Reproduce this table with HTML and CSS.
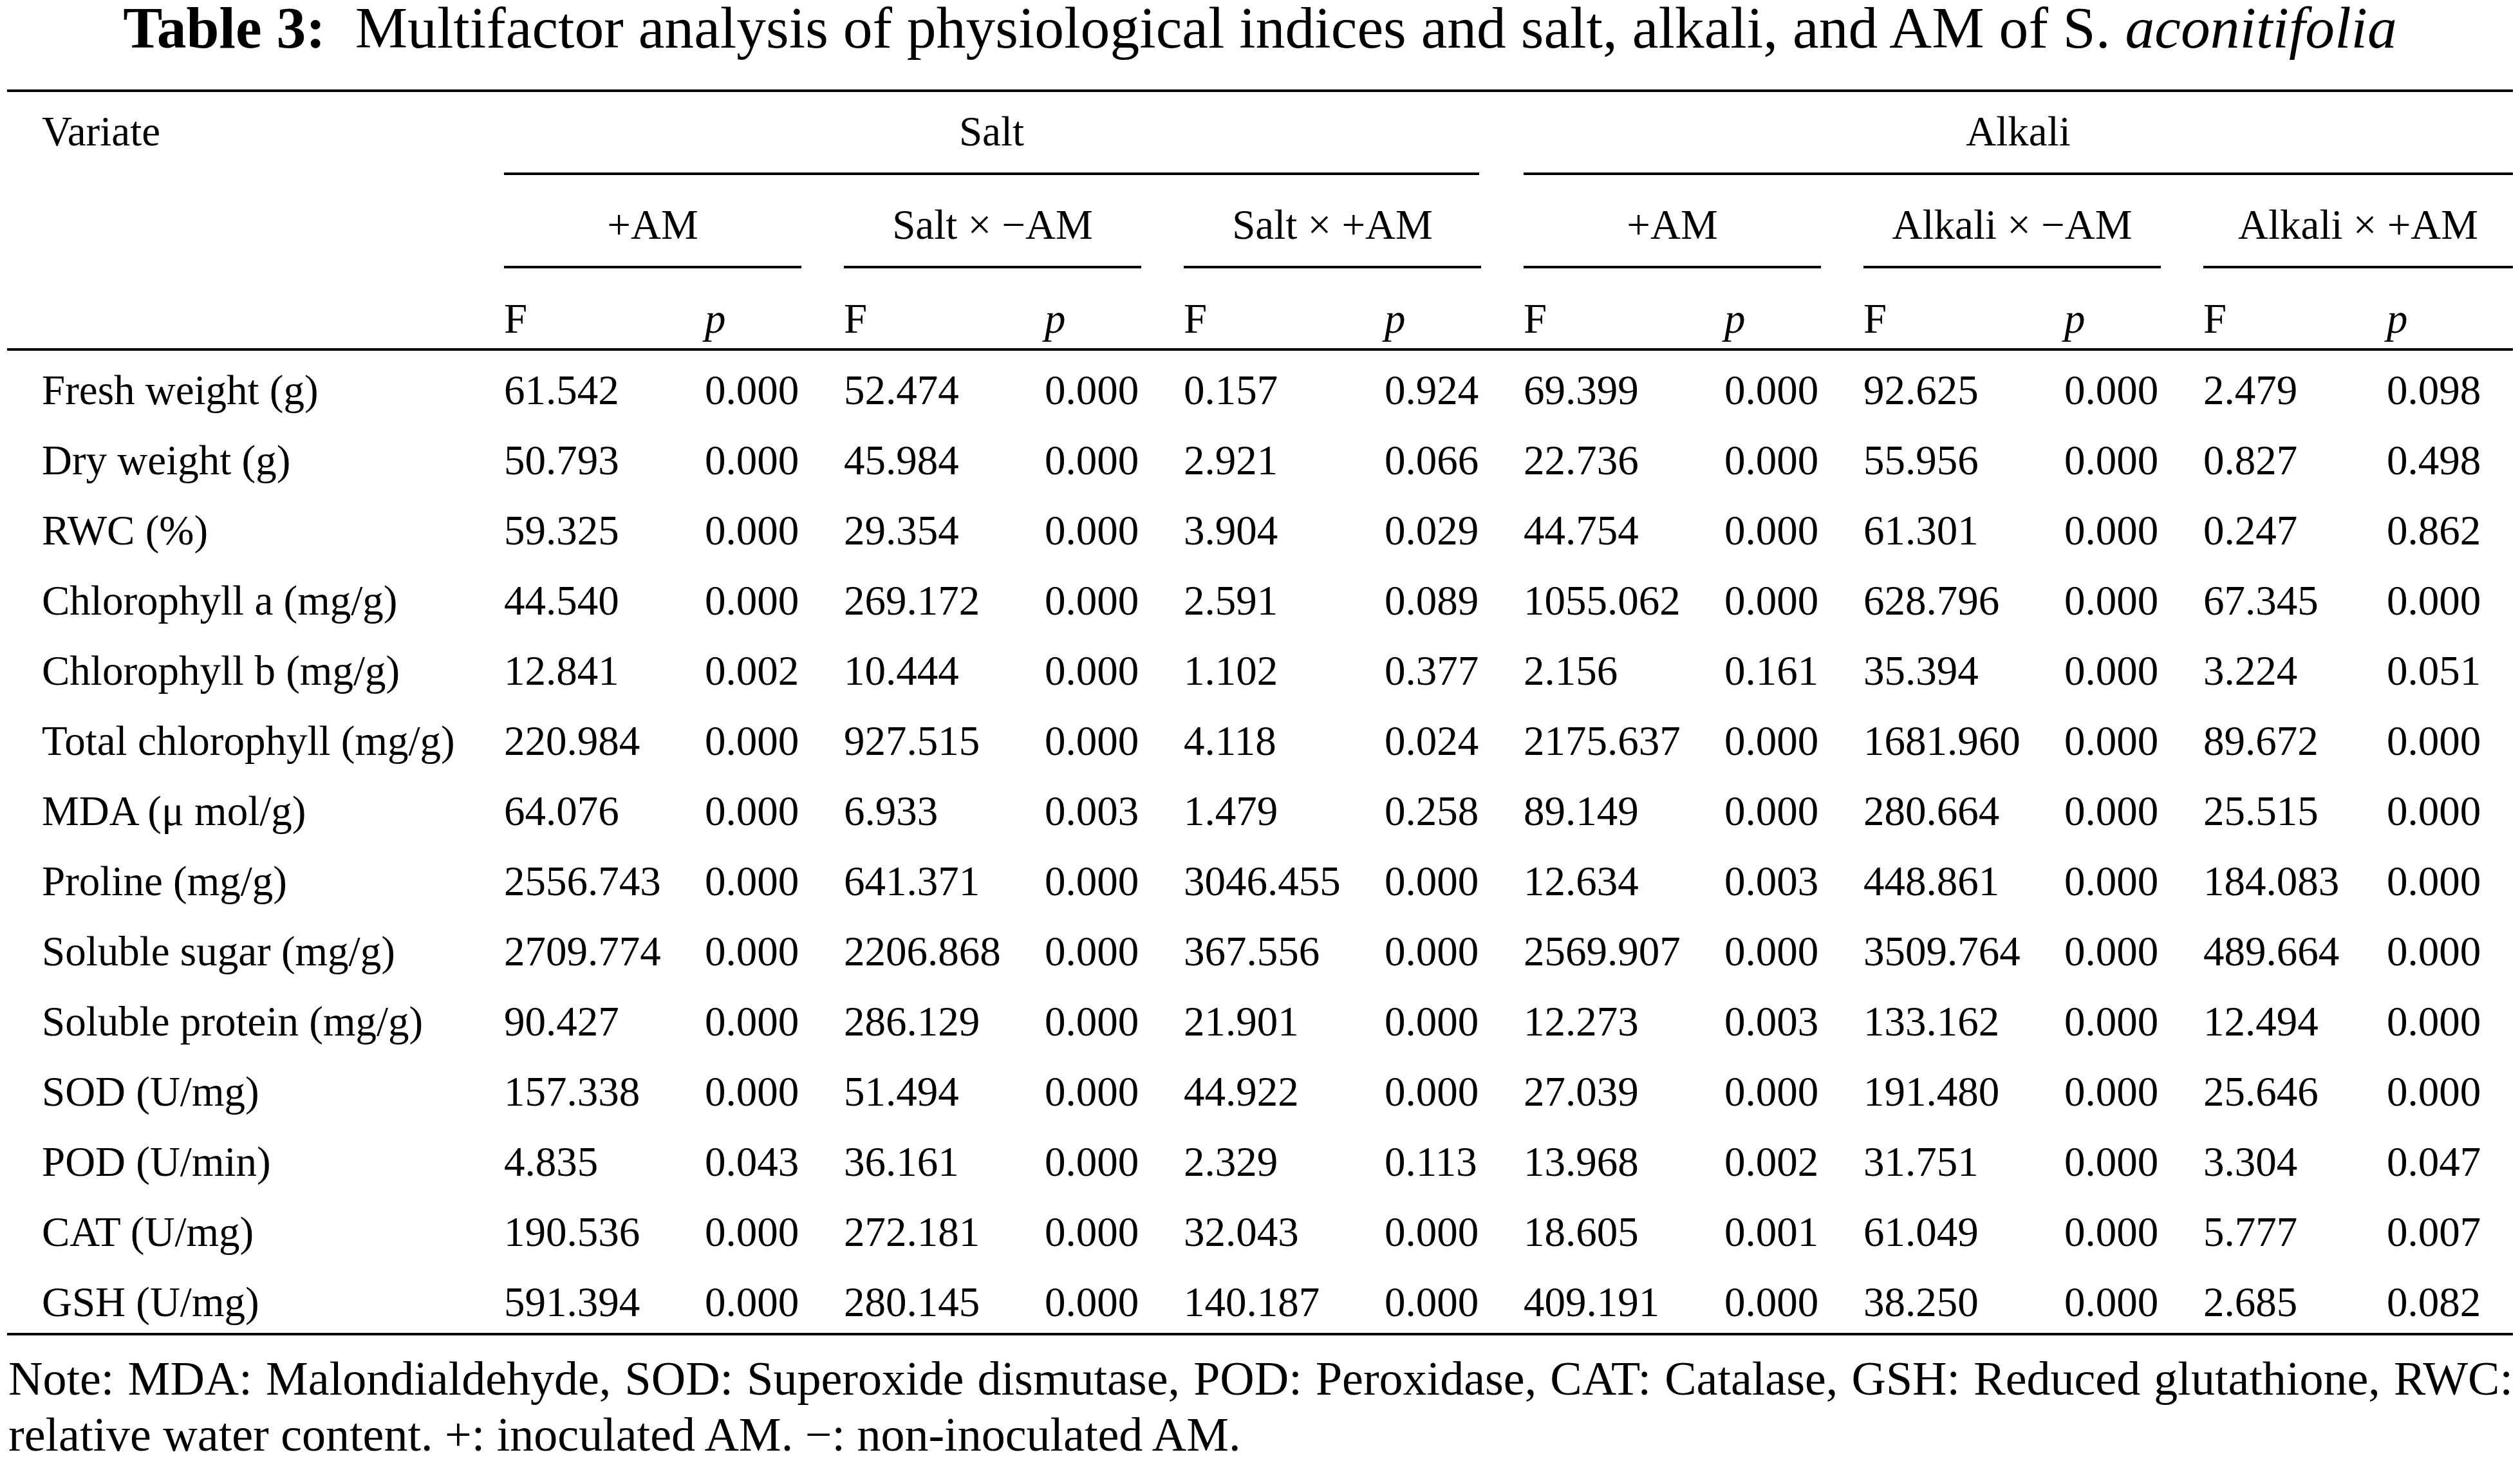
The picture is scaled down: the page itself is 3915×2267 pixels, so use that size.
FILE: index.html
```html
<!DOCTYPE html>
<html lang="en">
<head>
<meta charset="utf-8">
<title>Table 3</title>
<link rel="stylesheet" href="styles.css">
</head>
<body>
<div class="page">
  <h1 class="title"><b>Table 3:</b>&nbsp; Multifactor analysis of physiological indices and salt, alkali, and AM of S. <i>aconitifolia</i></h1>
  <table class="data">
    <colgroup>
      <col class="c-label">
      <col class="c-f"><col class="c-p">
      <col class="c-f"><col class="c-p">
      <col class="c-f"><col class="c-p">
      <col class="c-f"><col class="c-p">
      <col class="c-f"><col class="c-p">
      <col class="c-f-last"><col class="c-p-last">
    </colgroup>
    <thead>
      <tr class="h1">
        <th rowspan="3" class="variate">Variate</th>
        <th colspan="6" class="grp"><div class="rl rl-1 trim-main">Salt</div></th>
        <th colspan="6" class="grp"><div class="rl rl-1">Alkali</div></th>
      </tr>
      <tr class="h2">
        <th colspan="2" class="grp"><div class="rl rl-2 trim-sub">+AM</div></th>
        <th colspan="2" class="grp"><div class="rl rl-2 trim-sub">Salt × −AM</div></th>
        <th colspan="2" class="grp"><div class="rl rl-2 trim-sub">Salt × +AM</div></th>
        <th colspan="2" class="grp"><div class="rl rl-2 trim-sub">+AM</div></th>
        <th colspan="2" class="grp"><div class="rl rl-2 trim-sub">Alkali × −AM</div></th>
        <th colspan="2" class="grp"><div class="rl rl-2">Alkali × +AM</div></th>
      </tr>
      <tr class="h3">
        <th>F</th><th><i>p</i></th>
        <th>F</th><th><i>p</i></th>
        <th>F</th><th><i>p</i></th>
        <th>F</th><th><i>p</i></th>
        <th>F</th><th><i>p</i></th>
        <th>F</th><th><i>p</i></th>
      </tr>
    </thead>
    <tbody>
      <tr><td class="lbl">Fresh weight (g)</td><td>61.542</td><td>0.000</td><td>52.474</td><td>0.000</td><td>0.157</td><td>0.924</td><td>69.399</td><td>0.000</td><td>92.625</td><td>0.000</td><td>2.479</td><td>0.098</td></tr>
      <tr><td class="lbl">Dry weight (g)</td><td>50.793</td><td>0.000</td><td>45.984</td><td>0.000</td><td>2.921</td><td>0.066</td><td>22.736</td><td>0.000</td><td>55.956</td><td>0.000</td><td>0.827</td><td>0.498</td></tr>
      <tr><td class="lbl">RWC (%)</td><td>59.325</td><td>0.000</td><td>29.354</td><td>0.000</td><td>3.904</td><td>0.029</td><td>44.754</td><td>0.000</td><td>61.301</td><td>0.000</td><td>0.247</td><td>0.862</td></tr>
      <tr><td class="lbl">Chlorophyll a (mg/g)</td><td>44.540</td><td>0.000</td><td>269.172</td><td>0.000</td><td>2.591</td><td>0.089</td><td>1055.062</td><td>0.000</td><td>628.796</td><td>0.000</td><td>67.345</td><td>0.000</td></tr>
      <tr><td class="lbl">Chlorophyll b (mg/g)</td><td>12.841</td><td>0.002</td><td>10.444</td><td>0.000</td><td>1.102</td><td>0.377</td><td>2.156</td><td>0.161</td><td>35.394</td><td>0.000</td><td>3.224</td><td>0.051</td></tr>
      <tr><td class="lbl">Total chlorophyll (mg/g)</td><td>220.984</td><td>0.000</td><td>927.515</td><td>0.000</td><td>4.118</td><td>0.024</td><td>2175.637</td><td>0.000</td><td>1681.960</td><td>0.000</td><td>89.672</td><td>0.000</td></tr>
      <tr><td class="lbl">MDA (μ mol/g)</td><td>64.076</td><td>0.000</td><td>6.933</td><td>0.003</td><td>1.479</td><td>0.258</td><td>89.149</td><td>0.000</td><td>280.664</td><td>0.000</td><td>25.515</td><td>0.000</td></tr>
      <tr><td class="lbl">Proline (mg/g)</td><td>2556.743</td><td>0.000</td><td>641.371</td><td>0.000</td><td>3046.455</td><td>0.000</td><td>12.634</td><td>0.003</td><td>448.861</td><td>0.000</td><td>184.083</td><td>0.000</td></tr>
      <tr><td class="lbl">Soluble sugar (mg/g)</td><td>2709.774</td><td>0.000</td><td>2206.868</td><td>0.000</td><td>367.556</td><td>0.000</td><td>2569.907</td><td>0.000</td><td>3509.764</td><td>0.000</td><td>489.664</td><td>0.000</td></tr>
      <tr><td class="lbl">Soluble protein (mg/g)</td><td>90.427</td><td>0.000</td><td>286.129</td><td>0.000</td><td>21.901</td><td>0.000</td><td>12.273</td><td>0.003</td><td>133.162</td><td>0.000</td><td>12.494</td><td>0.000</td></tr>
      <tr><td class="lbl">SOD (U/mg)</td><td>157.338</td><td>0.000</td><td>51.494</td><td>0.000</td><td>44.922</td><td>0.000</td><td>27.039</td><td>0.000</td><td>191.480</td><td>0.000</td><td>25.646</td><td>0.000</td></tr>
      <tr><td class="lbl">POD (U/min)</td><td>4.835</td><td>0.043</td><td>36.161</td><td>0.000</td><td>2.329</td><td>0.113</td><td>13.968</td><td>0.002</td><td>31.751</td><td>0.000</td><td>3.304</td><td>0.047</td></tr>
      <tr><td class="lbl">CAT (U/mg)</td><td>190.536</td><td>0.000</td><td>272.181</td><td>0.000</td><td>32.043</td><td>0.000</td><td>18.605</td><td>0.001</td><td>61.049</td><td>0.000</td><td>5.777</td><td>0.007</td></tr>
      <tr><td class="lbl">GSH (U/mg)</td><td>591.394</td><td>0.000</td><td>280.145</td><td>0.000</td><td>140.187</td><td>0.000</td><td>409.191</td><td>0.000</td><td>38.250</td><td>0.000</td><td>2.685</td><td>0.082</td></tr>
    </tbody>
  </table>
  <p class="note">Note: MDA: Malondialdehyde, SOD: Superoxide dismutase, POD: Peroxidase, CAT: Catalase, GSH: Reduced glutathione, RWC: relative water content. +: inoculated AM. −: non-inoculated AM.</p>
</div>
</body>
</html>
```

FILE: styles.css
```css
html, body {
  margin: 0;
  padding: 0;
  background: #ffffff;
}

body {
  font-family: "Liberation Serif", "Times New Roman", serif;
  color: #000000;
}

.page {
  width: 3915px;
  height: 2267px;
  overflow: hidden;
}

.title {
  margin: 0;
  font-size: 91.6px;
  line-height: 86px;
  height: 86px;
  font-weight: normal;
  text-align: center;
  white-space: nowrap;
}

.title b {
  font-weight: bold;
}

.data {
  margin: 53px 0 0 11px;
  width: 3893px;
  table-layout: fixed;
  border-collapse: separate;
  border-spacing: 0;
  font-size: 65px;
  line-height: 65px;
}

.c-label { width: 772px; }
.c-f { width: 312px; }
.c-p { width: 216px; }
.c-f-last { width: 285px; }
.c-p-last { width: 196px; }

.data th {
  font-weight: normal;
  text-align: left;
  padding: 0;
  white-space: nowrap;
  vertical-align: top;
}

.h1 th {
  border-top: 4px solid #000;
}

.variate {
  padding: 29px 0 0 54px !important;
  border-bottom: 4px solid #000;
}

.grp {
  text-align: center !important;
}

.rl {
  border-bottom: 4px solid #000;
  text-align: center;
}

.rl-1 {
  padding: 29px 0 31px;
}

.rl-2 {
  padding: 45px 0 31px;
}

.trim-main {
  margin-right: 69px;
}

.trim-sub {
  margin-right: 66px;
}

.h3 th {
  padding: 46px 0 13px;
  border-bottom: 4px solid #000;
}

.data td {
  padding: 22px 0;
  white-space: nowrap;
  vertical-align: top;
}

.data td.lbl {
  padding-left: 54px;
}

.data tbody tr:first-child td {
  padding-top: 29px;
}

.data tbody tr:last-child td {
  padding-bottom: 15px;
  border-bottom: 4px solid #000;
}

.note {
  margin: 24px 11px 0 13px;
  font-size: 74px;
  line-height: 87px;
  text-align: justify;
}
```
